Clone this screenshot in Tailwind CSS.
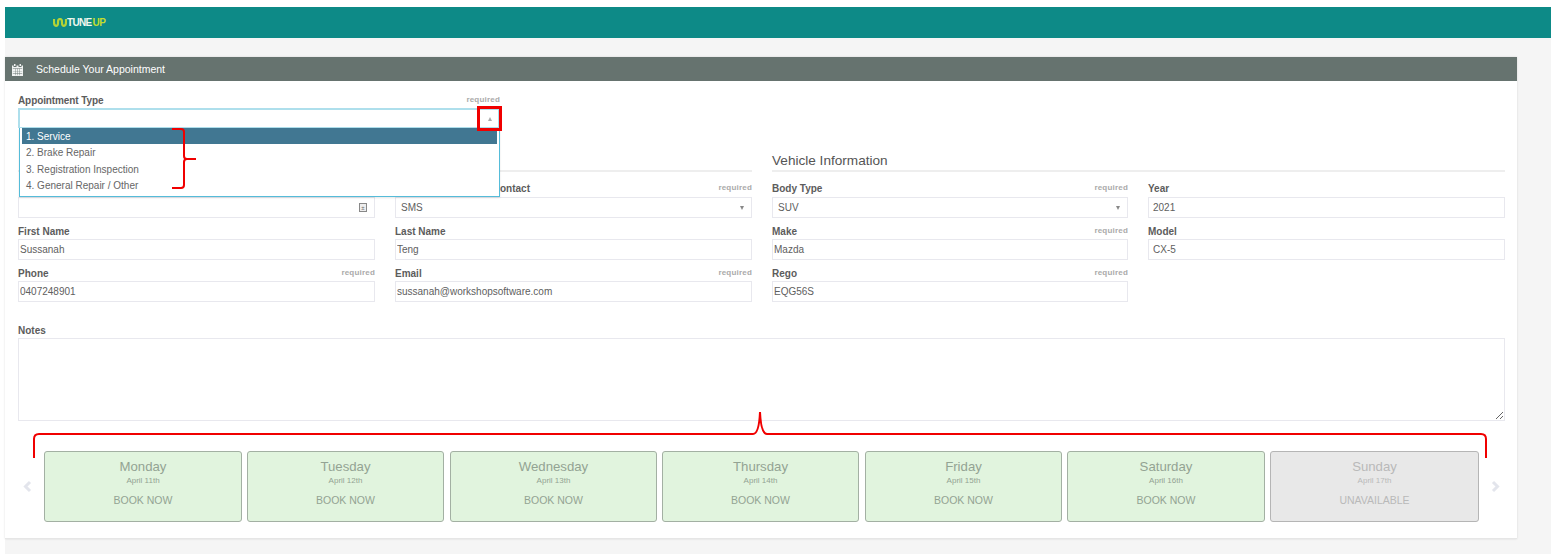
<!DOCTYPE html>
<html lang="en">

<head>
    <meta charset="UTF-8">
    <meta name="viewport" content="width=device-width, initial-scale=1.0">
    <title>Schedule Your Appointment</title>
    <script src="https://cdn.jsdelivr.net/npm/@tailwindcss/browser@4"></script>
</head>

<body class="relative h-[554px] overflow-hidden bg-white pt-[7px] pl-[5px] font-['Liberation_Sans',Arial,sans-serif] text-[10px] text-[#606060]">
    <div class="h-[547px] bg-[#f5f5f5]">
        <!-- top bar -->
        <header class="flex h-[31px] items-center bg-[#0d8a87] pl-[48px]">
            <svg class="h-[9px] w-[14px]" viewBox="0 0 14 9" fill="none" stroke="#b5d336" stroke-width="2.200">
                <path d="M1 1v3c0 5 4 5 4 1V4c0-4 4-4 4 0v1c0 4 4 4 4-1V1" />
            </svg>
            <span class="text-[10px] font-bold tracking-[-0.7px] text-[#f2f7ee]">TUNE</span>
            <span class="ml-[1px] text-[10px] font-bold tracking-[-0.4px] text-[#c4dc2c]">UP</span>
        </header>

        <!-- panel -->
        <section class="mt-[19px] h-[482px] w-[1512px] border-b border-[#e6e6e6] bg-white shadow-[0_0_2px_rgba(0,0,0,0.12)]">
            <div class="flex h-[24px] items-center bg-[#66736f] pt-px pl-[7px] text-[10.500px] text-white">
                <svg class="mr-[13px] h-[12px] w-[11px]" viewBox="0 0 11 12" fill="#f1f3f2">
                    <path d="M2 0h1.500v2H2zM7.500 0H9v2H7.500zM0 1.500h1.500v1.500h3V1.500h2v1.500h3V1.500H11V12H0z" />
                    <path fill="#66736f" d="M0.800 4.200h9.400v0.500H0.800zM3.200 4.700h0.400v6.500H3.200zM5.300 4.700h0.400v6.500H5.300zM7.400 4.700h0.400v6.500H7.400zM0.800 6.900h9.400v0.400H0.800zM0.800 9h9.400v0.400H0.800z" />
                </svg>
                Schedule Your Appointment
            </div>

            <div class="pt-[12px] pl-[13px] pr-[12px]">
                <!-- appointment type with its list open -->
                <div class="relative z-10 w-[482px]">
                    <div class="flex h-[15px] items-start justify-between pt-px">
                        <label class="font-bold leading-[14px] tracking-[-0.1px] text-[#5c5c5c]">Appointment Type</label>
                        <span class="text-[8px] font-bold leading-[11px] tracking-[0.2px] text-[#aaa]">required</span>
                    </div>
                    <div class="flex h-[20px] items-center justify-end border-2 border-b-[1px] border-[#aedfec] bg-white pr-[6px]">
                        <span class="h-0 w-0 border-x-[2.500px] border-b-[4px] border-x-transparent border-b-[#aaa]"></span>
                    </div>
                    <ul class="absolute top-[35px] left-[1px] h-[69px] w-[481px] border border-t-0 border-[#55bcd9] bg-white px-[2px] shadow-[0_1px_2px_rgba(0,0,0,0.1)]">
                        <li class="flex h-[16px] items-center bg-[#417792] pl-[4px] text-white">1. Service</li>
                        <li class="flex h-[17px] items-center pl-[4px] text-[#666]">2. Brake Repair</li>
                        <li class="flex h-[16px] items-center pl-[4px] text-[#666]">3. Registration Inspection</li>
                        <li class="flex h-[17px] items-center pl-[4px] text-[#666]">4. General Repair / Other</li>
                    </ul>
                </div>

                <!-- section headings, the first one sits behind the open list -->
                <div class="mt-[22px] grid grid-cols-[734px_733px] gap-x-[20px]">
                    <div class="h-[22px] border-b-2 border-[#eee]"></div>
                    <h2 class="h-[22px] border-b-2 border-[#eee] text-[13.600px] leading-[21px] text-[#555]">Vehicle Information</h2>
                </div>

                <div class="mt-[4px] grid grid-cols-[357px_357px_356px_357px] gap-x-[20px]">
                    <div>
                        <div class="h-[21px]"></div>
                        <div class="flex h-[21px] items-center justify-end border border-[#e8e8ee] pr-[7px]">
                            <span class="flex h-[9px] w-[8px] items-center justify-center border border-[#888] bg-[#eee] text-[6px] leading-none text-[#666]">±</span>
                        </div>
                    </div>
                    <div>
                        <div class="flex h-[21px] items-end justify-between pb-[1px]"><label class="font-bold leading-[14px] text-[#5c5c5c]">Preferred Method of Contact</label><span class="pb-px text-[8px] font-bold leading-[14px] tracking-[0.2px] text-[#aaa]">required</span></div>
                        <div class="flex h-[21px] items-center justify-between border border-[#e8e8ee] pr-[7px] pl-[5px]">SMS<span class="h-0 w-0 border-x-[2.500px] border-t-[4px] border-x-transparent border-t-[#888]"></span></div>
                    </div>
                    <div>
                        <div class="flex h-[21px] items-end justify-between pb-[1px]"><label class="font-bold leading-[14px] text-[#5c5c5c]">Body Type</label><span class="pb-px text-[8px] font-bold leading-[14px] tracking-[0.2px] text-[#aaa]">required</span></div>
                        <div class="flex h-[21px] items-center justify-between border border-[#e8e8ee] pr-[7px] pl-[5px]">SUV<span class="h-0 w-0 border-x-[2.500px] border-t-[4px] border-x-transparent border-t-[#888]"></span></div>
                    </div>
                    <div>
                        <div class="flex h-[21px] items-end justify-between pb-[1px]"><label class="font-bold leading-[14px] text-[#5c5c5c]">Year</label></div>
                        <input class="h-[21px] w-full border border-[#e8e8ee] px-[4px]" value="2021" readonly>
                    </div>

                    <div>
                        <div class="flex h-[21px] items-end justify-between"><label class="font-bold leading-[14px] text-[#5c5c5c]">First Name</label></div>
                        <input class="h-[21px] w-full border border-[#e8e8ee] px-[1px]" value="Sussanah" readonly>
                    </div>
                    <div>
                        <div class="flex h-[21px] items-end justify-between"><label class="font-bold leading-[14px] text-[#5c5c5c]">Last Name</label></div>
                        <input class="h-[21px] w-full border border-[#e8e8ee] px-[1px]" value="Teng" readonly>
                    </div>
                    <div>
                        <div class="flex h-[21px] items-end justify-between"><label class="font-bold leading-[14px] text-[#5c5c5c]">Make</label><span class="pb-px text-[8px] font-bold leading-[14px] tracking-[0.2px] text-[#aaa]">required</span></div>
                        <input class="h-[21px] w-full border border-[#e8e8ee] px-[1px]" value="Mazda" readonly>
                    </div>
                    <div>
                        <div class="flex h-[21px] items-end justify-between"><label class="font-bold leading-[14px] text-[#5c5c5c]">Model</label></div>
                        <input class="h-[21px] w-full border border-[#e8e8ee] px-[4px]" value="CX-5" readonly>
                    </div>

                    <div>
                        <div class="flex h-[21px] items-end justify-between"><label class="font-bold leading-[14px] text-[#5c5c5c]">Phone</label><span class="pb-px text-[8px] font-bold leading-[14px] tracking-[0.2px] text-[#aaa]">required</span></div>
                        <input class="h-[21px] w-full border border-[#e8e8ee] px-[1px]" value="0407248901" readonly>
                    </div>
                    <div>
                        <div class="flex h-[21px] items-end justify-between"><label class="font-bold leading-[14px] text-[#5c5c5c]">Email</label><span class="pb-px text-[8px] font-bold leading-[14px] tracking-[0.2px] text-[#aaa]">required</span></div>
                        <input class="h-[21px] w-full border border-[#e8e8ee] px-[1px]" value="sussanah@workshopsoftware.com" readonly>
                    </div>
                    <div>
                        <div class="flex h-[21px] items-end justify-between"><label class="font-bold leading-[14px] text-[#5c5c5c]">Rego</label><span class="pb-px text-[8px] font-bold leading-[14px] tracking-[0.2px] text-[#aaa]">required</span></div>
                        <input class="h-[21px] w-full border border-[#e8e8ee] px-[1px]" value="EQG56S" readonly>
                    </div>
                </div>

                <!-- notes -->
                <div class="mt-[21px]">
                    <label class="block h-[15px] pt-px font-bold leading-[14px] text-[#5c5c5c]">Notes</label>
                    <textarea class="block h-[83px] w-[1487px] border border-[#e8e8ee]"></textarea>
                </div>

                <!-- days -->
                <div class="mt-[30px] flex h-[71px] items-center">
                    <svg class="ml-[3px] mr-[10px] h-[13px] w-[13px]" viewBox="0 0 13 13" fill="none" stroke="#e3e5ec" stroke-width="3">
                        <path d="M9 2 4.500 6.500 9 11" />
                    </svg>
                    <div class="flex gap-[5px] text-center">
                        <button class="flex h-[71px] w-[198px] flex-col items-center rounded-[3px] border border-[#a3b0a3] bg-[#e1f4de] text-[#93a393]"><span class="mt-[7px] text-[13.200px] leading-[16px]">Monday</span><span class="text-[8px] leading-[12px]">April 11th</span><span class="mt-[6px] text-[10.500px] leading-[14px]">BOOK NOW</span></button>
                        <button class="flex h-[71px] w-[197px] flex-col items-center rounded-[3px] border border-[#a3b0a3] bg-[#e1f4de] text-[#93a393]"><span class="mt-[7px] text-[13.200px] leading-[16px]">Tuesday</span><span class="text-[8px] leading-[12px]">April 12th</span><span class="mt-[6px] text-[10.500px] leading-[14px]">BOOK NOW</span></button>
                        <button class="ml-px flex h-[71px] w-[207px] flex-col items-center rounded-[3px] border border-[#a3b0a3] bg-[#e1f4de] text-[#93a393]"><span class="mt-[7px] text-[13.200px] leading-[16px]">Wednesday</span><span class="text-[8px] leading-[12px]">April 13th</span><span class="mt-[6px] text-[10.500px] leading-[14px]">BOOK NOW</span></button>
                        <button class="flex h-[71px] w-[197px] flex-col items-center rounded-[3px] border border-[#a3b0a3] bg-[#e1f4de] text-[#93a393]"><span class="mt-[7px] text-[13.200px] leading-[16px]">Thursday</span><span class="text-[8px] leading-[12px]">April 14th</span><span class="mt-[6px] text-[10.500px] leading-[14px]">BOOK NOW</span></button>
                        <button class="ml-px flex h-[71px] w-[197px] flex-col items-center rounded-[3px] border border-[#a3b0a3] bg-[#e1f4de] text-[#93a393]"><span class="mt-[7px] text-[13.200px] leading-[16px]">Friday</span><span class="text-[8px] leading-[12px]">April 15th</span><span class="mt-[6px] text-[10.500px] leading-[14px]">BOOK NOW</span></button>
                        <button class="flex h-[71px] w-[198px] flex-col items-center rounded-[3px] border border-[#a3b0a3] bg-[#e1f4de] text-[#93a393]"><span class="mt-[7px] text-[13.200px] leading-[16px]">Saturday</span><span class="text-[8px] leading-[12px]">April 16th</span><span class="mt-[6px] text-[10.500px] leading-[14px]">BOOK NOW</span></button>
                        <button class="flex h-[71px] w-[209px] flex-col items-center rounded-[3px] border border-[#b5b5b5] bg-[#e8e8e8] text-[#b9b9b9]"><span class="mt-[7px] text-[13.200px] leading-[16px]">Sunday</span><span class="text-[8px] leading-[12px]">April 17th</span><span class="mt-[6px] text-[10.500px] leading-[14px]">UNAVAILABLE</span></button>
                    </div>
                    <svg class="ml-[10px] h-[13px] w-[13px]" viewBox="0 0 13 13" fill="none" stroke="#e3e5ec" stroke-width="3">
                        <path d="M4 2 8.500 6.500 4 11" />
                    </svg>
                </div>
            </div>
        </section>
    </div>

    <!-- red annotations drawn on the screenshot -->
    <svg class="absolute top-0 left-0 z-20 h-[554px] w-[1551px]" viewBox="0 0 1551 554" fill="none" stroke="#f00000">
        <rect x="478.500" y="107.500" width="22" height="22" stroke-width="3" />
        <path stroke-width="2" d="M172 129h9q3 0 3 3v24q0 3 3 3h9M187 159q-3 0-3 3v23q0 3-3 3h-9" />
        <path stroke-width="2" d="M34 458v-19q0-5 5-5h714q6 0 7-22q1 22 7 22h714q5 0 5 5v19" />
    </svg>
</body>

</html>
